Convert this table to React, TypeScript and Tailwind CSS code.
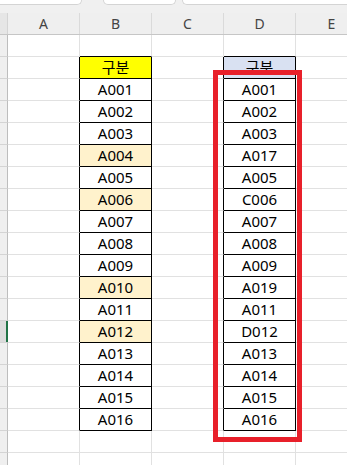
const cols = ["A", "B", "C", "D", "E"];

const left = ["A001", "A002", "A003", "A004", "A005", "A006", "A007", "A008", "A009", "A010", "A011", "A012", "A013", "A014", "A015", "A016"];
const right = ["A001", "A002", "A003", "A017", "A005", "C006", "A007", "A008", "A009", "A019", "A011", "D012", "A013", "A014", "A015", "A016"];
const marked = new Set(["A004", "A006", "A010", "A012"]);

const TOTAL_ROWS = 20;

type Cell = { text?: string; bg?: string; boxed?: boolean };

function buildRow(r: number): Cell[] {
    // r = 0 empty, r = 1 headings, r 2..17 data
    const row: Cell[] = [{}, {}, {}, {}, {}];
    if (r === 1) {
        row[1] = { text: "구분", bg: "bg-[#ffff00]", boxed: true };
        row[3] = { text: "구분", bg: "bg-[#d9e1f2]", boxed: true };
    } else if (r >= 2 && r <= 17) {
        const b = left[r - 2];
        row[1] = { text: b, bg: marked.has(b) ? "bg-[#fff2cc]" : "bg-white", boxed: true };
        row[3] = { text: right[r - 2], bg: "bg-white", boxed: true };
    }
    return row;
}

export default function App() {
    return (
        <div
            className="relative w-[347px] h-[465px] overflow-hidden bg-white text-black"
            style={{ fontFamily: '"Noto Sans", "Noto Sans CJK KR", sans-serif' }}
        >
            {/* ribbon edge with the bottom of the toolbar boxes */}
            <div className="flex h-[13px] bg-[#f0f0f0] gap-[21px]">
                <div className="w-[82px] h-[5px] bg-white rounded-br-[5px] border-b border-r border-[#d4d4d4]" />
                <div className="flex gap-[6px] flex-1">
                    <div className="w-[73px] h-[5px] bg-white rounded-b-[5px] border-b border-x border-[#d4d4d4]" />
                    <div className="flex-1 h-[5px] bg-white rounded-bl-[5px] border-b border-l border-[#d4d4d4]" />
                </div>
            </div>

            {/* column headings */}
            <div className="flex h-[22px] bg-[#efefef] border-b border-[#c6c6c6]">
                <div className="w-[8px] shrink-0 border-r border-[#d4d4d4] bg-[#e6e6e6]" />
                {cols.map((c) => (
                    <div
                        key={c}
                        className="w-[72px] shrink-0 flex items-center justify-center border-r border-[#dadada] text-[14px] text-[#444]"
                    >
                        {c}
                    </div>
                ))}
            </div>

            {/* sheet rows */}
            {Array.from({ length: TOTAL_ROWS }).map((_, r) => {
                const row = buildRow(r);
                const next = buildRow(r + 1);
                const active = r === 13;
                return (
                    <div key={r} className="flex h-[22px]">
                        <div
                            className={
                                "relative w-[8px] shrink-0 border-r border-b border-r-[#bdbdbd] border-b-[#d4d4d4] " +
                                (active ? "bg-[#dcdcdc]" : "bg-[#efefef]")
                            }
                        >
                            {active && <div className="absolute right-[-1px] top-0 w-[2px] h-full bg-[#217346]" />}
                        </div>
                        {row.map((cell, ci) => {
                            const rightBoxed = ci < 4 && row[ci + 1].boxed;
                            const blackRight = cell.boxed || rightBoxed;
                            const blackBottom = cell.boxed || next[ci].boxed;
                            return (
                                <div
                                    key={ci}
                                    className={
                                        "w-[72px] shrink-0 flex items-center justify-center border-r border-b text-[15px] leading-none " +
                                        (blackRight ? "border-r-black " : "border-r-[#e1e1e1] ") +
                                        (blackBottom ? "border-b-black " : "border-b-[#e1e1e1] ") +
                                        (cell.bg ?? "")
                                    }
                                >
                                    {cell.text}
                                </div>
                            );
                        })}
                    </div>
                );
            })}

            {/* highlight frame around column D */}
            <div className="absolute left-[213px] top-[70px] w-[89px] h-[372px] border-[5px] border-[#e8202a]" />
        </div>
    );
}
